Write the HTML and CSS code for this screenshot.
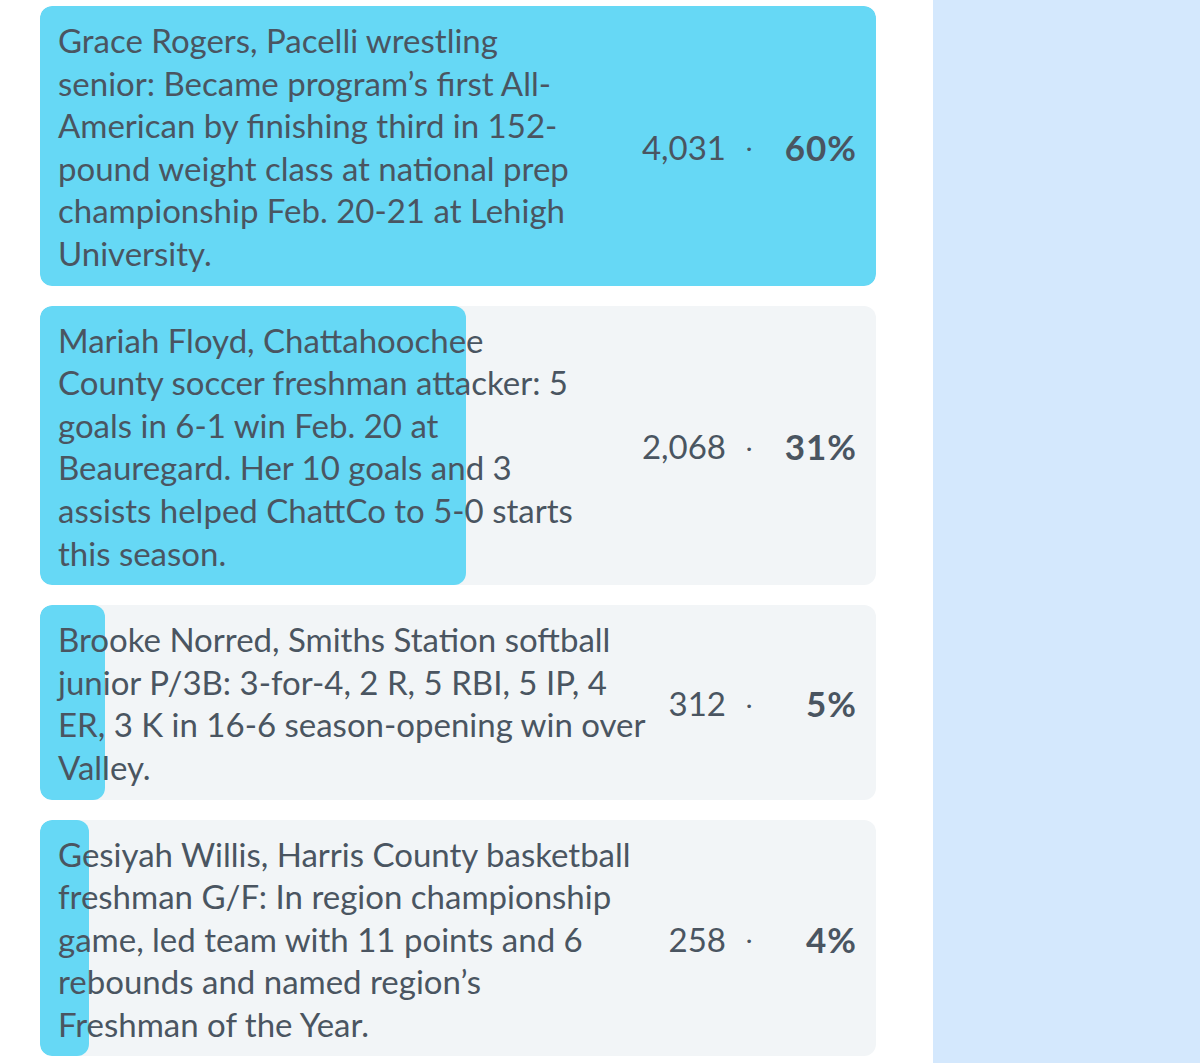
FILE: index.html
```html
<!DOCTYPE html>
<html lang="en">
<head>
  <meta charset="UTF-8">
  <title>Poll results</title>
  <link rel="stylesheet" href="styles.css">
</head>
<body>

<div class="page">
  <main class="poll">

    <div class="choice">
      <div class="fill" style="width: 100%"></div>
      <p class="label">Grace Rogers, Pacelli wrestling<br>senior: Became program’s first All-<br>American by finishing third in 152-<br>pound weight class at national prep<br>championship Feb. 20-21 at Lehigh<br>University.</p>
      <div class="stats">
        <span class="count">4,031</span>
        <span class="dot">·</span>
        <span class="pct">60%</span>
      </div>
    </div>

    <div class="choice">
      <div class="fill" style="width: 51%"></div>
      <p class="label">Mariah Floyd, Chattahoochee<br>County soccer freshman attacker: 5<br>goals in 6-1 win Feb. 20 at<br>Beauregard. Her 10 goals and 3<br>assists helped ChattCo to 5-0 starts<br>this season.</p>
      <div class="stats">
        <span class="count">2,068</span>
        <span class="dot">·</span>
        <span class="pct">31%</span>
      </div>
    </div>

    <div class="choice">
      <div class="fill" style="width: 7.8%"></div>
      <p class="label">Brooke Norred, Smiths Station softball<br>junior P/3B: 3-for-4, 2 R, 5 RBI, 5 IP, 4<br>ER, 3 K in 16-6 season-opening win over<br>Valley.</p>
      <div class="stats">
        <span class="count">312</span>
        <span class="dot">·</span>
        <span class="pct">5%</span>
      </div>
    </div>

    <div class="choice">
      <div class="fill" style="width: 5.9%"></div>
      <p class="label">Gesiyah Willis, Harris County basketball<br>freshman G/F: In region championship<br>game, led team with 11 points and 6<br>rebounds and named region’s<br>Freshman of the Year.</p>
      <div class="stats">
        <span class="count">258</span>
        <span class="dot">·</span>
        <span class="pct">4%</span>
      </div>
    </div>

  </main>

  <aside class="side"></aside>
</div>

</body>
</html>
```

FILE: styles.css
```css
body { margin: 0; background: #fff; font-family: Lato, "Noto Sans", sans-serif; color: #4a5561; }
.page { display: flex; min-height: 1063px; }
.poll { width: 836px; padding: 6px 57px 0 40px; display: flex; flex-direction: column; gap: 20px; }
.side { flex: 1; background: #d4e8fd; }

.choice { position: relative; display: flex; align-items: center; gap: 16px; background: #f2f5f7; border-radius: 12px; padding: 13px 20px 11px 18px; overflow: hidden; }
.fill { position: absolute; left: 0; top: 0; bottom: 0; background: #66d8f5; border-radius: 12px; }
.label { position: relative; flex: 1; margin: 0; font-size: 33px; line-height: 42.6px; white-space: nowrap; }
.stats { position: relative; display: flex; align-items: center; font-size: 33px; }
.count { text-align: right; }
.dot { width: 46px; text-align: center; font-size: 24px; }
.pct { width: 85px; text-align: right; font-weight: bold; font-size: 35px; letter-spacing: 1px; margin-right: -1px; }
```
